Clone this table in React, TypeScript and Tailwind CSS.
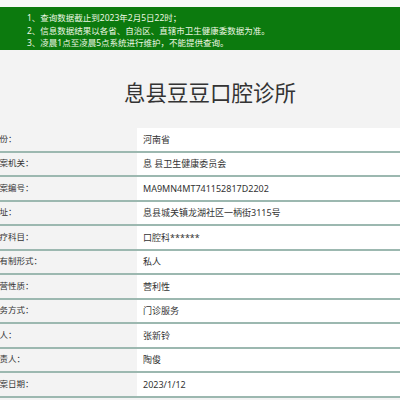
import React from "react";

const rows: [string, string][] = [
  ["省份：", "河南省"],
  ["备案机关：", "息 县卫生健康委员会"],
  ["备案编号：", "MA9MN4MT741152817D2202"],
  ["地址：", "息县城关镇龙湖社区一柄街3115号"],
  ["诊疗科目：", "口腔科******"],
  ["所有制形式：", "私人"],
  ["经营性质：", "营利性"],
  ["服务方式：", "门诊服务"],
  ["法人：", "张新铃"],
  ["负责人：", "陶俊"],
  ["备案日期：", "2023/1/12"],
];

const notices = [
  "1、查询数据截止到2023年2月5日22时；",
  "2、信息数据结果以各省、自治区、直辖市卫生健康委数据为准。",
  "3、凌晨1点至凌晨5点系统进行维护，不能提供查询。",
];

const App = () => {
  return (
    <div
      className="h-[400px] w-[400px] overflow-hidden bg-[#f3f3f3] text-[#333]"
      style={{ fontFamily: '"Noto Sans", "Noto Sans CJK SC", sans-serif' }}
    >
      <div className="h-[7px] bg-[#f8f8f8]" />
      <div className="h-[43px] bg-[#0c7a0e] pl-[27px] pt-[5px] text-[8.5px] leading-[12.5px] text-[#eef8e4]">
        {notices.map((n) => (
          <div key={n}>{n}</div>
        ))}
      </div>
      <div className="flex h-[78px] items-center justify-center pl-[20px] pt-[8px] text-[21.5px] text-[#333]">
        息县豆豆口腔诊所
      </div>
      <div>
        {rows.map(([label, value]) => (
          <div
            key={label}
            className="box-border flex h-[24.5px] border-b-2 border-[#9cb8b0]"
          >
            <div className="flex w-[137px] items-center bg-[#f3f3f3] text-[8.5px]">
              <span className="-ml-[9px] whitespace-nowrap">{label}</span>
            </div>
            <div className="flex flex-1 items-center bg-white pl-[6px] text-[9px]">
              {value}
            </div>
          </div>
        ))}
      </div>
    </div>
  );
};

export default App;
